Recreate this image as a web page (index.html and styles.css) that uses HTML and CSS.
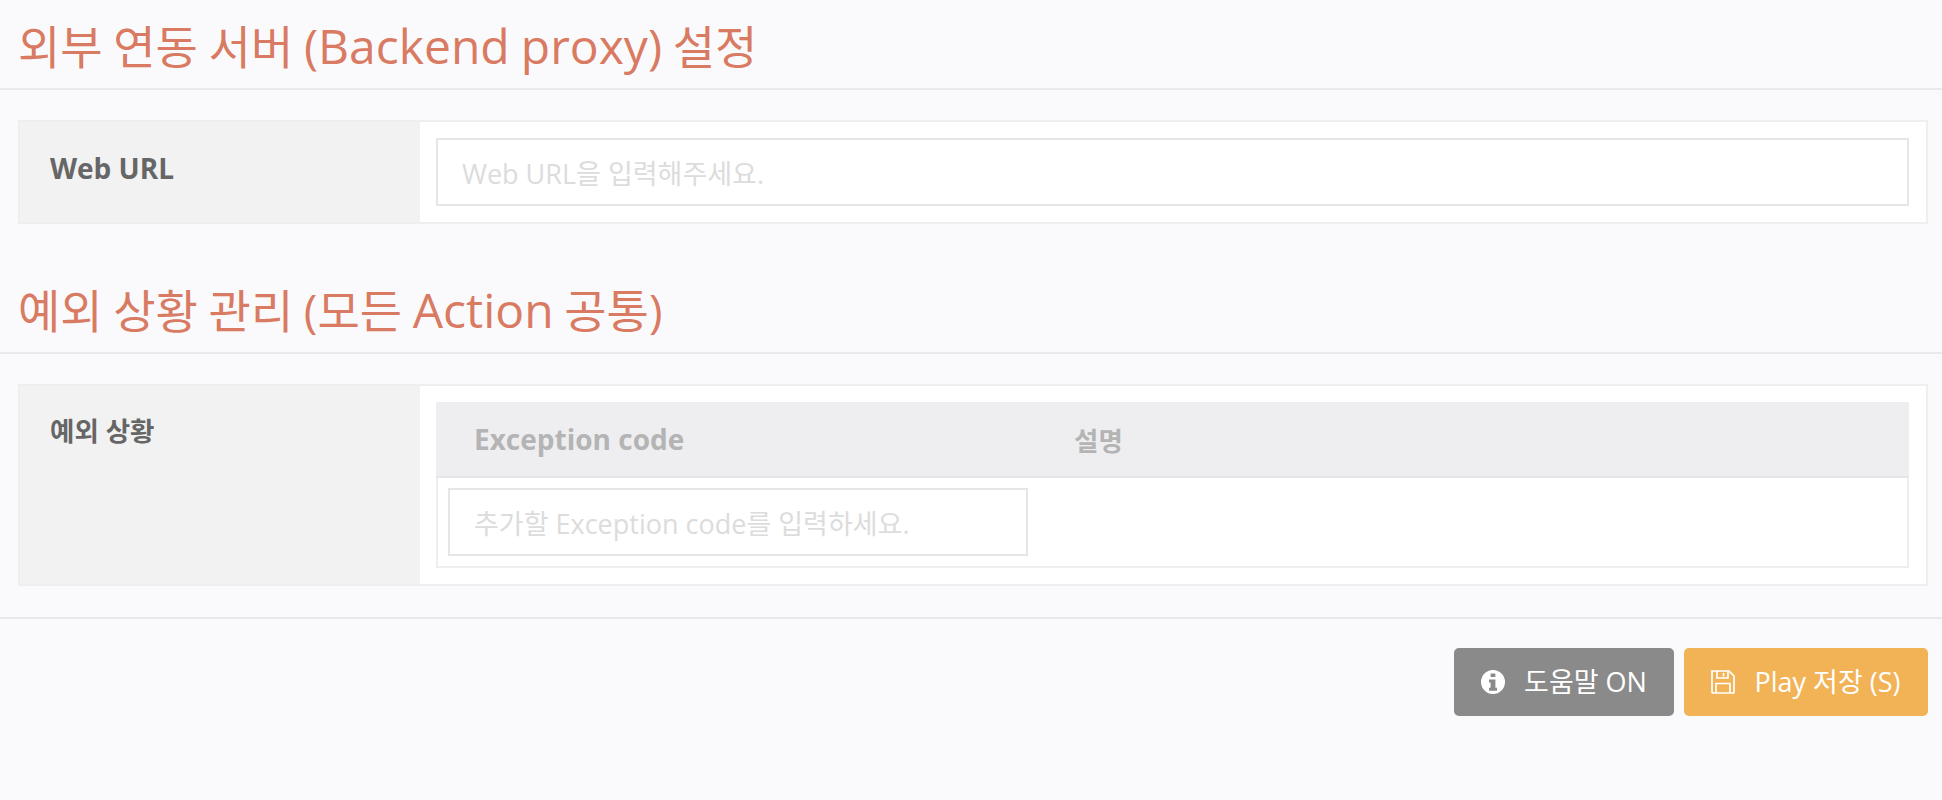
FILE: index.html
```html
<!DOCTYPE html>
<html lang="ko">
<head>
  <meta charset="UTF-8">
  <title>Play 설정</title>
  <link rel="stylesheet" href="styles.css">
</head>
<body>

  <!-- Backend proxy -->
  <h2 class="section-title first">외부 연동 서버 <span class="latin">(Backend proxy)</span> 설정</h2>
  <div class="panel">
    <div class="panel-label panel-label-lg">Web URL</div>
    <div class="panel-body">
      <input class="text-input" type="text" placeholder="Web URL을 입력해주세요.">
    </div>
  </div>

  <!-- Exceptions -->
  <h2 class="section-title">예외 상황 관리 (모든 <span class="latin">Action</span> 공통)</h2>
  <div class="panel">
    <div class="panel-label">예외 상황</div>
    <div class="panel-body">
      <div class="exception-table">
        <div class="exception-head">
          <span class="col-code">Exception code</span>
          <span>설명</span>
        </div>
        <div class="exception-row">
          <input class="text-input code-input" type="text" placeholder="추가할 Exception code를 입력하세요.">
        </div>
      </div>
    </div>
  </div>

  <!-- Buttons -->
  <div class="actions">
    <button class="btn btn-gray" type="button">
      <svg class="btn-icon" viewBox="0 0 24 24"><path fill="#fff" fill-rule="evenodd" d="M12 0a12 12 0 1 0 0 24 12 12 0 0 0 0-24zM9.6 3.4h4.8v3.7H9.6zM8 9.6h6.4v8.2H16v3H8v-3h1.6v-5.2H8z"/></svg>
      <span>도움말 ON</span>
    </button>
    <button class="btn btn-orange" type="button">
      <svg class="btn-icon" viewBox="0 0 24 24"><path fill="none" stroke="#fff" stroke-width="1.7" d="M1 1h17l5 5v16a1 1 0 0 1-1 1H2a1 1 0 0 1-1-1zM6 1v7h11V1M12.5 3v3.5M5 23V13.5h14V23"/></svg>
      <span>Play 저장 (S)</span>
    </button>
  </div>

</body>
</html>
```

FILE: styles.css
```css
body {
  margin: 0;
  background-color: #fafafc;
  font-family: "Open Sans", "Noto Sans CJK KR", sans-serif;
  color: #666;
}

.section-title {
  margin: 39px 0 0;
  padding: 20px 18px 16px;
  height: 53px;
  line-height: 53px;
  font-size: 46px;
  font-weight: 400;
  word-spacing: -1.3px;
  color: #d97a62;
  border-bottom: 2px solid #e9e9ec;
}

.section-title .latin {
  font-size: 48px;
}

.section-title.first {
  margin-top: 0;
  padding-top: 4px;
  padding-bottom: 0;
  height: 84px;
  line-height: 84px;
}

.panel {
  display: flex;
  margin: 30px 14px 0 18px;
  border: 2px solid #eeeeef;
  background-color: #fff;
}

.panel-label {
  flex: none;
  width: 370px;
  padding: 28px 0 0 30px;
  background-color: #f2f2f2;
  font-size: 26.5px;
  font-weight: 700;
  line-height: 34px;
  color: #666;
}

.panel-label-lg {
  padding-top: 29px;
  font-size: 28px;
}

.panel-body {
  flex: 1;
  padding: 16px 17px 16px 16px;
}

.text-input {
  display: block;
  box-sizing: border-box;
  width: 100%;
  height: 68px;
  padding: 2px 24px 0;
  border: 2px solid #e6e6e6;
  background-color: #fff;
  font-family: inherit;
  font-size: 27px;
  outline: none;
}

.text-input::placeholder {
  color: #dcdcdc;
}

.exception-table {
  border: 2px solid #eeeeef;
}

.exception-head {
  display: flex;
  align-items: center;
  height: 74px;
  background-color: #eeeef0;
  border-bottom: 2px solid #e6e6e8;
  margin: -2px -2px 0;
  padding-left: 38px;
  font-size: 26.5px;
  font-weight: 700;
  color: #b4b4b4;
}

.col-code {
  width: 600px;
  font-size: 28px;
}

.exception-row {
  padding: 10px;
}

.code-input {
  width: 580px;
}

.actions {
  display: flex;
  justify-content: flex-end;
  gap: 10px;
  margin-top: 31px;
  padding: 29px 14px 0 0;
  border-top: 2px solid #e9e9ec;
}

.btn {
  display: flex;
  align-items: center;
  justify-content: center;
  gap: 19px;
  height: 68px;
  padding: 0 0 4px;
  border: none;
  border-radius: 5px;
  color: #fff;
  font-family: inherit;
  font-size: 27px;
}

.btn-gray {
  width: 220px;
  background-color: #8a8a8a;
}

.btn-orange {
  width: 244px;
  background-color: #f2b356;
}

.btn-icon {
  width: 24px;
  height: 24px;
  margin-top: 4px;
}
```
